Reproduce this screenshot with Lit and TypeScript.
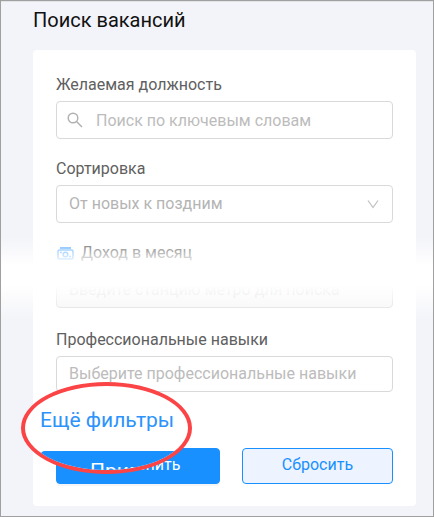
import { LitElement, html, css } from "lit";
import { customElement } from "lit/decorators.js";

@customElement("app-root")
export class AppRoot extends LitElement {
  static styles = css`
    :host {
      display: block;
      font-family: Roboto, "Liberation Sans", sans-serif;
      font-size: 16px;
      line-height: 24px;
      color: #606060;
    }
    * {
      box-sizing: border-box;
    }
    .page {
      position: relative;
      min-height: 100vh;
      padding: 5px 17px 9px 32px;
      border: 1px solid #a0a0a0;
      background: #f3f4f9;
      box-shadow: inset 0 1px 0 #e2e3e6;
    }
    h1 {
      margin: 0 0 16px;
      font-size: 20px;
      line-height: 28px;
      font-weight: 400;
      color: #111;
    }
    .card {
      position: relative;
      display: flex;
      flex-direction: column;
      gap: 18px;
      padding: 23px 23px 22px;
      border-radius: 4px;
      background: #fff;
    }
    .field {
      display: flex;
      flex-direction: column;
      gap: 4px;
    }
    .control {
      display: flex;
      align-items: center;
      height: 38px;
      padding: 0 12px;
      border: 1px solid #d9d9d9;
      border-radius: 4px;
      background: #fff;
    }
    .control.low {
      height: 36px;
      padding-bottom: 2px;
    }
    .control.off {
      background: #f5f5f5;
    }
    .control.search {
      padding-left: 10px;
      gap: 13px;
    }
    .control input,
    .control select {
      flex: 1;
      min-width: 0;
      height: 100%;
      margin: 0;
      padding: 0;
      border: 0;
      outline: 0;
      appearance: none;
      background: transparent;
      font: inherit;
      color: #b4b4b4;
    }
    .control input::placeholder {
      color: #bcbcbc;
      opacity: 1;
    }
    .control.off input::placeholder {
      color: #cfcfcf;
    }
    .icon {
      flex: none;
      display: block;
    }
    .spliced {
      display: flex;
      flex-direction: column;
      gap: 5px;
      padding-bottom: 2px;
    }
    .income {
      display: flex;
      align-items: center;
      gap: 7px;
    }
    .fade {
      position: absolute;
      left: 0;
      right: 0;
      top: 236px;
      height: 84px;
      pointer-events: none;
      background: linear-gradient(
        rgba(255, 255, 255, 0),
        #fff 34%,
        #fff 58%,
        rgba(255, 255, 255, 0)
      );
    }
    .actions {
      display: flex;
      gap: 22px;
      margin-top: 38px;
    }
    button {
      height: 36px;
      padding: 0 0 2px;
      border: 1px solid #1890ff;
      border-radius: 4px;
      font: inherit;
    }
    .apply {
      flex: 164;
      background: #1890ff;
      color: #fff;
      box-shadow: 0 2px 0 #f4f5f6;
    }
    .reset {
      flex: 151;
      background: #edf4ff;
      color: #1890ff;
    }
    .lens {
      position: absolute;
      left: -12px;
      bottom: 32px;
      width: 171px;
      height: 92px;
      padding: 20px 0 0 15px;
      overflow: hidden;
      border: 4px solid #fb4446;
      border-radius: 50%;
      background: #fff;
      font-size: 21px;
      line-height: 28px;
    }
    .lens a {
      display: block;
      color: #2b93fb;
      text-decoration: none;
      white-space: nowrap;
    }
    .enlarged {
      width: 200px;
      height: 44px;
      margin-top: 17px;
      padding: 6px 0 0 50px;
      border-radius: 5px;
      background: #1890ff;
      color: #fff;
    }
  `;

  render() {
    return html`
      <main class="page">
        <h1>Поиск вакансий</h1>
        <form class="card" @submit=${(e: Event) => e.preventDefault()}>
          <div class="field">
            <label for="position">Желаемая должность</label>
            <div class="control search">
              <svg class="icon" width="16" height="16" viewBox="0 0 16 16" fill="none" stroke="#b0b0b0" stroke-width="1.4" aria-hidden="true">
                <circle cx="6" cy="6" r="4.8" />
                <path d="M9.5 9.5 15 15" />
              </svg>
              <input id="position" type="text" placeholder="Поиск по ключевым словам" />
            </div>
          </div>
          <div class="field">
            <label for="sort">Сортировка</label>
            <div class="control">
              <select id="sort">
                <option>От новых к поздним</option>
              </select>
              <svg class="icon" width="14" height="14" viewBox="0 0 14 14" fill="none" stroke="#bfbfbf" stroke-width="1.2" aria-hidden="true">
                <path d="M2 3.5 7 10.5 12 3.5" />
              </svg>
            </div>
          </div>
          <div class="spliced">
            <div class="income">
              <svg class="icon" width="18" height="14" viewBox="0 0 18 14" fill="none" stroke="#5fb0ff" stroke-width="1.5" aria-hidden="true">
                <path d="M4 2h11" stroke-width="2" />
                <rect x="2" y="4" width="15" height="9" rx="1.5" />
                <circle cx="9.5" cy="8.5" r="2.3" />
                <path d="M4 6.5h2M13 10.5h2" />
              </svg>
              <span>Доход в месяц</span>
            </div>
            <div class="control off">
              <input type="text" aria-label="Станция метро" placeholder="Введите станцию метро для поиска" disabled />
            </div>
          </div>
          <div class="field">
            <label for="skills">Профессиональные навыки</label>
            <div class="control low">
              <input id="skills" type="text" placeholder="Выберите профессиональные навыки" />
            </div>
          </div>
          <div class="actions">
            <button class="apply" type="submit">Применить</button>
            <button class="reset" type="reset">Сбросить</button>
          </div>
          <div class="lens">
            <a href="#filters">Ещё фильтры</a>
            <div class="enlarged" aria-hidden="true">Применить</div>
          </div>
        </form>
        <div class="fade"></div>
      </main>
    `;
  }
}
